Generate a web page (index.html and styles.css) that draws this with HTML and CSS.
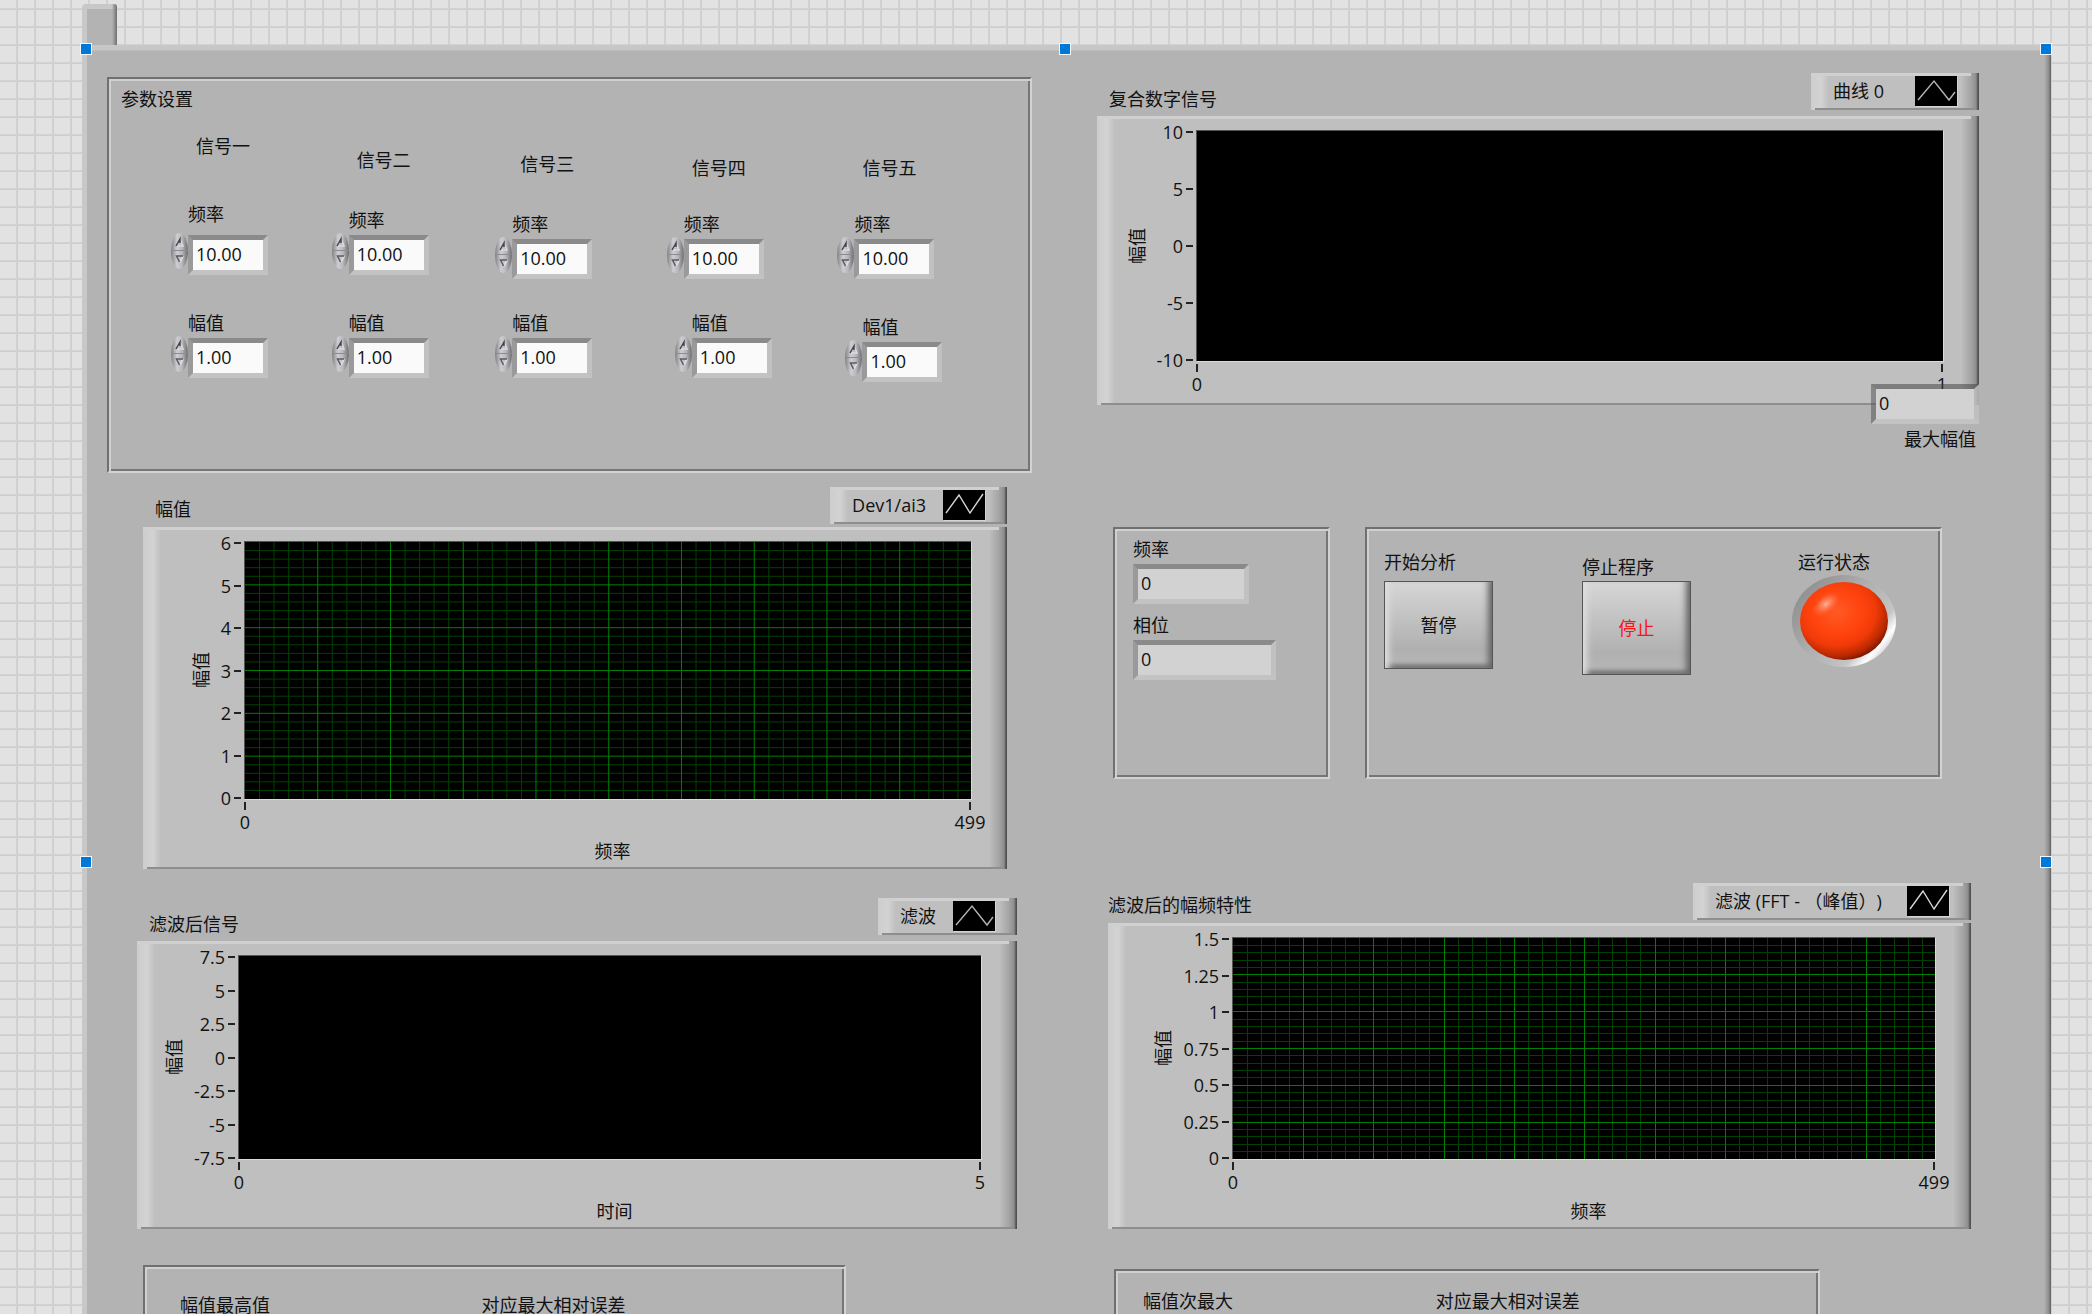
FILE: index.html
```html
<!DOCTYPE html>
<html lang="zh-CN">
<head>
<meta charset="utf-8">
<meta name="viewport" content="width=device-width, initial-scale=1">
<title>信号分析</title>
<link rel="stylesheet" href="styles.css">
</head>
<body>
<svg class="defs" aria-hidden="true">
  <symbol id="grid" viewBox="0 0 499 30" preserveAspectRatio="none">
    <path class="grid__minor" d="M10 0V30M20 0V30M30 0V30M40 0V30M60 0V30M70 0V30M80 0V30M90 0V30M110 0V30M120 0V30M130 0V30M140 0V30M160 0V30M170 0V30M180 0V30M190 0V30M210 0V30M220 0V30M230 0V30M240 0V30M260 0V30M270 0V30M280 0V30M290 0V30M310 0V30M320 0V30M330 0V30M340 0V30M360 0V30M370 0V30M380 0V30M390 0V30M410 0V30M420 0V30M430 0V30M440 0V30M460 0V30M470 0V30M480 0V30M490 0V30M0 1H499M0 2H499M0 3H499M0 4H499M0 6H499M0 7H499M0 8H499M0 9H499M0 11H499M0 12H499M0 13H499M0 14H499M0 16H499M0 17H499M0 18H499M0 19H499M0 21H499M0 22H499M0 23H499M0 24H499M0 26H499M0 27H499M0 28H499M0 29H499"/>
    <path class="grid__major" d="M50 0V30M100 0V30M150 0V30M200 0V30M250 0V30M300 0V30M350 0V30M400 0V30M450 0V30M0 5H499M0 10H499M0 15H499M0 20H499M0 25H499"/>
  </symbol>
  <symbol id="wave" viewBox="0 0 42 30"><path d="M3 24L19 5L34 24L40 16" fill="none" stroke="#b4b4b4" stroke-width="1.4"/></symbol>
  <symbol id="zigzag" viewBox="0 0 42 30"><path d="M3 23L16 5L27 23L40 4" fill="none" stroke="#d6d6d6" stroke-width="1.4"/></symbol>
  <symbol id="up" viewBox="0 0 17 17"><path d="M9 6L12 13H6" fill="none" stroke="#dcdce0" stroke-width="1.5"/><path d="M5 13L9 6V10" fill="none" stroke="#45454a" stroke-width="1.5"/></symbol>
  <symbol id="down" viewBox="0 0 17 17"><path d="M9 10L12 4" stroke="#dcdce0" stroke-width="2"/><path d="M12 4H5.500L8.500 10" fill="none" stroke="#5c5c60" stroke-width="1.500"/></symbol>
</svg>

<main class="workspace">
  <div class="tab"></div>
  <div class="panel">
    <span class="handle handle--tl"></span><span class="handle handle--tc"></span><span class="handle handle--tr"></span>
    <span class="handle handle--ml"></span><span class="handle handle--mr"></span>

    <div class="column column--left">
      <section class="group group--params">
        <h2 class="text group__title">参数设置</h2>
        <div class="signals">
          <div class="signal">
            <div class="signal__head">
              <h3 class="text signal__name">信号一</h3>
              <div class="control control--spaced"><label class="text" for="f1">频率</label>
                <div class="numeric"><span class="spin"><button aria-label="增加"><svg><use href="#up"/></svg></button><button aria-label="减少"><svg><use href="#down"/></svg></button></span><input class="field" id="f1" value="10.00"></div></div>
            </div>
            <div class="control"><label class="text" for="a1">幅值</label>
              <div class="numeric"><span class="spin"><button aria-label="增加"><svg><use href="#up"/></svg></button><button aria-label="减少"><svg><use href="#down"/></svg></button></span><input class="field" id="a1" value="1.00"></div></div>
          </div>
          <div class="signal signal--second">
            <div class="signal__head">
              <h3 class="text signal__name">信号二</h3>
              <div class="control"><label class="text" for="f2">频率</label>
                <div class="numeric"><span class="spin"><button aria-label="增加"><svg><use href="#up"/></svg></button><button aria-label="减少"><svg><use href="#down"/></svg></button></span><input class="field" id="f2" value="10.00"></div></div>
            </div>
            <div class="control"><label class="text" for="a2">幅值</label>
              <div class="numeric"><span class="spin"><button aria-label="增加"><svg><use href="#up"/></svg></button><button aria-label="减少"><svg><use href="#down"/></svg></button></span><input class="field" id="a2" value="1.00"></div></div>
          </div>
          <div class="signal signal--low">
            <div class="signal__head">
              <h3 class="text signal__name">信号三</h3>
              <div class="control"><label class="text" for="f3">频率</label>
                <div class="numeric"><span class="spin"><button aria-label="增加"><svg><use href="#up"/></svg></button><button aria-label="减少"><svg><use href="#down"/></svg></button></span><input class="field" id="f3" value="10.00"></div></div>
            </div>
            <div class="control"><label class="text" for="a3">幅值</label>
              <div class="numeric"><span class="spin"><button aria-label="增加"><svg><use href="#up"/></svg></button><button aria-label="减少"><svg><use href="#down"/></svg></button></span><input class="field" id="a3" value="1.00"></div></div>
          </div>
          <div class="signal signal--low signal--lower">
            <div class="signal__head">
              <h3 class="text signal__name">信号四</h3>
              <div class="control"><label class="text" for="f4">频率</label>
                <div class="numeric"><span class="spin"><button aria-label="增加"><svg><use href="#up"/></svg></button><button aria-label="减少"><svg><use href="#down"/></svg></button></span><input class="field" id="f4" value="10.00"></div></div>
            </div>
            <div class="control control--shifted"><label class="text" for="a4">幅值</label>
              <div class="numeric"><span class="spin"><button aria-label="增加"><svg><use href="#up"/></svg></button><button aria-label="减少"><svg><use href="#down"/></svg></button></span><input class="field" id="a4" value="1.00"></div></div>
          </div>
          <div class="signal signal--low signal--lower signal--tall">
            <div class="signal__head">
              <h3 class="text signal__name">信号五</h3>
              <div class="control"><label class="text" for="f5">频率</label>
                <div class="numeric"><span class="spin"><button aria-label="增加"><svg><use href="#up"/></svg></button><button aria-label="减少"><svg><use href="#down"/></svg></button></span><input class="field" id="f5" value="10.00"></div></div>
            </div>
            <div class="control control--shifted"><label class="text" for="a5">幅值</label>
              <div class="numeric"><span class="spin"><button aria-label="增加"><svg><use href="#up"/></svg></button><button aria-label="减少"><svg><use href="#down"/></svg></button></span><input class="field" id="a5" value="1.00"></div></div>
          </div>
        </div>
      </section>

      <section class="chart chart--amplitude">
        <header class="chart__head">
          <h2 class="text chart__title">幅值</h2>
          <div class="legend bevel"><span class="text">Dev1/ai3</span><svg class="legend__icon"><use href="#zigzag"/></svg></div>
        </header>
        <div class="chart__body bevel">
          <div class="yaxis"><span class="text yaxis__title">幅值</span>
            <ul class="yaxis__ticks"><li>6</li><li>5</li><li>4</li><li>3</li><li>2</li><li>1</li><li>0</li></ul></div>
          <svg class="plot"><use href="#grid"/></svg>
          <ul class="xaxis"><li>0</li><li>499</li></ul>
          <p class="text xaxis__title">频率</p>
        </div>
      </section>

      <section class="chart chart--filtered">
        <header class="chart__head">
          <h2 class="text chart__title">滤波后信号</h2>
          <div class="legend bevel"><span class="text">滤波</span><svg class="legend__icon"><use href="#wave"/></svg></div>
        </header>
        <div class="chart__body bevel">
          <div class="yaxis"><span class="text yaxis__title">幅值</span>
            <ul class="yaxis__ticks"><li>7.5</li><li>5</li><li>2.5</li><li>0</li><li>-2.5</li><li>-5</li><li>-7.5</li></ul></div>
          <svg class="plot"></svg>
          <ul class="xaxis"><li>0</li><li>5</li></ul>
          <p class="text xaxis__title">时间</p>
        </div>
      </section>

      <section class="group group--result group--highest">
        <span class="text">幅值最高值</span><span class="text">对应最大相对误差</span>
      </section>
    </div>

    <div class="column column--right">
      <section class="chart chart--composite">
        <header class="chart__head">
          <h2 class="text chart__title">复合数字信号</h2>
          <div class="legend bevel"><span class="text">曲线 0</span><svg class="legend__icon"><use href="#wave"/></svg></div>
        </header>
        <div class="chart__body bevel">
          <div class="yaxis"><span class="text yaxis__title">幅值</span>
            <ul class="yaxis__ticks"><li>10</li><li>5</li><li>0</li><li>-5</li><li>-10</li></ul></div>
          <svg class="plot"></svg>
          <ul class="xaxis"><li>0</li><li>1</li></ul>
        </div>
        <div class="peak">
          <input class="field field--readout" id="peak" value="0" readonly>
          <label class="text" for="peak">最大幅值</label>
        </div>
      </section>

      <div class="status">
        <section class="group readouts">
          <label class="text" for="freq">频率</label>
          <input class="field field--readout field--freq" id="freq" value="0" readonly>
          <label class="text" for="phase">相位</label>
          <input class="field field--readout field--phase" id="phase" value="0" readonly>
        </section>
        <section class="group actions">
          <div class="action"><span class="text">开始分析</span><button class="push">暂停</button></div>
          <div class="action action--stop"><span class="text">停止程序</span><button class="push push--stop">停止</button></div>
          <div class="action action--led"><span class="text">运行状态</span>
            <svg class="led" viewBox="0 0 107 94" role="img" aria-label="运行状态">
              <defs>
                <linearGradient id="ring" x1="0.1" y1="0.2" x2="0.9" y2="0.8"><stop offset="0" stop-color="#929292"/><stop offset=".45" stop-color="#b0b0b0"/><stop offset=".8" stop-color="#c4c4c4"/><stop offset=".93" stop-color="#fff"/><stop offset="1" stop-color="#ddd"/></linearGradient>
                <radialGradient id="lamp" cx=".42" cy=".38" r=".65"><stop offset="0" stop-color="#ff5a24"/><stop offset=".45" stop-color="#ff430e"/><stop offset=".68" stop-color="#f03a08"/><stop offset=".88" stop-color="#b82800"/><stop offset="1" stop-color="#701400"/></radialGradient>
                <radialGradient id="shine"><stop offset="0" stop-color="#ffb49c"/><stop offset=".4" stop-color="#ff8a66" stop-opacity=".7"/><stop offset="1" stop-color="#ff5a24" stop-opacity="0"/></radialGradient>
              </defs>
              <ellipse cx="53" cy="47" rx="52" ry="46" fill="url(#ring)"/>
              <ellipse cx="53" cy="47" rx="44" ry="39" fill="url(#lamp)"/>
              <ellipse cx="35" cy="30" rx="17" ry="10" transform="rotate(-38 35 30)" fill="url(#shine)"/>
            </svg></div>
        </section>
      </div>

      <section class="chart chart--spectrum">
        <header class="chart__head">
          <h2 class="text chart__title">滤波后的幅频特性</h2>
          <div class="legend bevel"><span class="text">滤波 (FFT - （峰值）)</span><svg class="legend__icon"><use href="#zigzag"/></svg></div>
        </header>
        <div class="chart__body bevel">
          <div class="yaxis"><span class="text yaxis__title">幅值</span>
            <ul class="yaxis__ticks"><li>1.5</li><li>1.25</li><li>1</li><li>0.75</li><li>0.5</li><li>0.25</li><li>0</li></ul></div>
          <svg class="plot"><use href="#grid"/></svg>
          <ul class="xaxis"><li>0</li><li>499</li></ul>
          <p class="text xaxis__title">频率</p>
        </div>
      </section>

      <section class="group group--result group--second">
        <span class="text">幅值次最大</span><span class="text">对应最大相对误差</span>
      </section>
    </div>
  </div>
</main>
</body>
</html>
```
FILE: styles.css
```css
* { box-sizing: border-box; }

body {
  margin: 0;
  color: #111;
  font: 18px/20px "Open Sans", "Noto Sans CJK SC", sans-serif;
  text-spacing-trim: space-all;
  background-color: #e2e2e2;
  background-image:
    linear-gradient(90deg, #d3d3d3 0 1px, #cecece 1px 2px, transparent 2px),
    linear-gradient(#d3d3d3 0 1px, #cecece 1px 2px, transparent 2px);
  background-size: 18px 18px;
  background-position: 16px 8px;
}

ul { margin: 0; padding: 0; list-style: none; }
input, button { font: inherit; color: inherit; border-radius: 0; }

.defs { position: absolute; width: 0; height: 0; }
.text { margin: 0; font-size: 18px; font-weight: 400; line-height: 20px; white-space: nowrap; }

.grid__minor, .grid__major { fill: none; stroke-width: 1px; vector-effect: non-scaling-stroke; shape-rendering: crispEdges; }
.grid__minor { stroke: #004000; }
.grid__major { stroke: #008000; }

/* Front panel */
.workspace { display: flex; flex-direction: column; height: 100vh; overflow: hidden; padding: 4px 41px 0 82px; }

.tab {
  position: relative;
  flex: none;
  width: 35px;
  height: 46px;
  margin-bottom: -5px;
  border-radius: 4px 3px 0 0;
  background:
    linear-gradient(90deg, transparent 30px, #9a9a9a 32px, #6e6e6e 35px),
    linear-gradient(#c8c8c8 5px, transparent 5px),
    linear-gradient(90deg, #c8c8c8 5px, #b3b3b3 5px);
}

.panel {
  position: relative;
  flex: 1 0 auto;
  display: grid;
  grid-template-columns: 925fr 882fr;
  column-gap: 65px;
  padding: 5px 72px 0 25px;
  background:
    linear-gradient(270deg, #6a6a6a 0 1px, #8c8c8c 2px, #b3b3b3 7px, transparent 7px),
    linear-gradient(90deg, #c8c8c8 5px, transparent 5px),
    linear-gradient(#c7c7c7 5px, #b3b3b3 6px);
}

.handle { position: absolute; width: 12px; height: 12px; border: 1px solid #f4f8fc; background: #0078d7; }
.handle--tl { top: -2px; left: -2px; }
.handle--tc { top: -2px; left: calc(50% - 8px); }
.handle--tr { top: -2px; right: -1px; }
.handle--ml { top: 811px; left: -2px; }
.handle--mr { top: 811px; right: -1px; }

.column { display: flex; flex-direction: column; min-width: 0; }
.column--left { padding-top: 27px; }
.column--right { padding-top: 23px; }

/* Etched frames */
.group {
  border: 2px solid;
  border-color: #707070 #d2d2d2 #d2d2d2 #707070;
  box-shadow: inset 2px 2px #d0d0d0, inset -2px -2px #767676;
}

.group--params { min-height: 396px; padding: 10px 0 0 12px; }
.group__title { margin-bottom: 27px; }

.signals { display: grid; grid-template-columns: 161fr 164fr 172fr 171fr 193fr; padding-left: 50px; }
.signal { display: grid; grid-template-rows: 139px 103px; align-items: end; }
.signal--low { grid-template-rows: 143px 99px; }
.signal--tall { grid-template-rows: 143px 103px; }
.signal__head { display: flex; flex-direction: column; justify-content: space-between; height: 100%; }
.signal--second .signal__head { padding-top: 14px; }
.signal--low .signal__head { padding-top: 18px; }
.signal--lower .signal__head { padding-top: 22px; }
.signal__name { padding-left: 25px; }

.control { display: flex; flex-direction: column; gap: 5px; }
.control--spaced { gap: 11px; }
.control--shifted { margin-left: 8px; }
.control > label { padding-left: 17px; }

.numeric { display: flex; align-items: flex-start; height: 40px; }
.spin { display: flex; flex-direction: column; width: 17px; height: 36px; margin-top: -2px; border-radius: 50%; overflow: hidden; background: linear-gradient(90deg, #808084, #cfcfd3 35%, #b8b8bc 65%, #6c6c70); }
.spin button { height: 18px; padding: 0; border: 0; background: none; }
.spin button:first-child { border-bottom: 1px solid #8c8c90; }
.spin svg { display: block; width: 17px; height: 17px; }

.field {
  width: 80px;
  height: 40px;
  padding: 0 3px 2px;
  border: 5px solid;
  border-color: #8a8a8a #c1c1c1 #c3c3c3 #9a9a9a;
  background: #fafafa;
  outline: 0;
}
.field--readout { background: #d2d2d2; }

/* Charts */
.bevel {
  background:
    linear-gradient(270deg, #505050 0 1px, #747474 2px, transparent 3px),
    linear-gradient(#d0d0d0 3px, transparent 3px) 0 0 / calc(100% - 8px) 100% no-repeat,
    linear-gradient(0deg, #8e8e8e 2px, transparent 2px) 4px 0 / 100% 100% no-repeat,
    linear-gradient(270deg, #808080, #a4a4a4 8px, #bfbfbf 18px, transparent 18px),
    linear-gradient(90deg, #cdcdcd, #d3d3d3 10px, #bfbfbf 18px);
}

.chart { position: relative; --gutter: 101px; }
.chart__head { display: flex; justify-content: space-between; align-items: flex-end; padding-bottom: 3px; }
.chart__title { padding: 0 0 5px 12px; }

.legend { display: flex; align-items: center; justify-content: space-between; gap: 17px; height: 37px; padding: 0 22px 2px 22px; }
.legend__icon { flex: none; width: 42px; height: 30px; background: #000; box-shadow: 1px 1px #d4d4d4; }

.chart__body { display: grid; grid-template-columns: var(--gutter) 1fr; padding: 14px 36px 8px 0; }
.plot { width: 100%; height: var(--plot); background: #000; border-top: 1px solid #555; border-left: 1px solid #555; box-shadow: 1px 1px #dadada; }

.yaxis { display: flex; justify-content: flex-end; align-items: center; gap: 10px; padding-right: 3px; }
.yaxis__title { writing-mode: vertical-rl; text-orientation: sideways; transform: rotate(180deg); }
.yaxis__ticks { display: flex; flex-direction: column; justify-content: space-between; align-self: stretch; padding-top: 1px; }
.yaxis__ticks li { display: flex; justify-content: flex-end; align-items: center; gap: 3px; height: 2px; }
.yaxis__ticks li::after { content: ""; width: 7px; height: 2px; background: #222; }

.xaxis { grid-column: 2; display: flex; justify-content: space-between; height: 34px; padding-top: 3px; }
.xaxis li { display: flex; flex-direction: column; align-items: center; gap: 2px; width: 2px; }
.xaxis li::before { content: ""; flex: none; width: 2px; height: 8px; background: #222; }
.xaxis__title { grid-column: 2; padding: 8px 0 0 10px; text-align: center; }

.chart--amplitude { --plot: 258px; margin: 14px 25px 0 36px; }
.chart--filtered { --plot: 204px; margin: 29px 15px 0 30px; }
.chart--filtered .chart__head, .chart--composite .chart__head { padding-bottom: 6px; }
.chart--filtered .chart__title, .chart--composite .chart__title { padding-bottom: 1px; }
.chart--composite { --plot: 231px; --gutter: 99px; }
.chart--composite .chart__body { padding-bottom: 10px; }
.chart--composite .legend { min-width: 168px; }
.chart--spectrum { --plot: 222px; --gutter: 124px; margin: 104px 8px 0 11px; }
.chart--spectrum .chart__title { padding-left: 0; }
.chart--spectrum .legend { min-width: 278px; }

/* Peak readout lies over the composite chart's corner */
.peak { position: absolute; top: 311px; right: 0; display: flex; flex-direction: column; align-items: flex-end; gap: 5px; }
.peak .field {
  width: 108px;
  border-color: rgba(60, 60, 60, .5) rgba(195, 195, 195, .8) #c3c3c3 rgba(80, 80, 80, .5);
  background-clip: padding-box;
}
.peak label { padding-right: 3px; }

/* Readouts and controls */
.status { display: grid; grid-template-columns: 217fr 577fr; column-gap: 35px; min-height: 252px; margin: 122px 37px 0 16px; }

.readouts { display: flex; flex-direction: column; align-items: flex-start; gap: 5px; padding: 10px 0 0 18px; }
.readouts .field--freq { width: 116px; margin-bottom: 6px; }
.readouts .field--phase { width: 143px; }

.actions { display: grid; grid-template-columns: 198fr 209fr 149fr; align-items: start; padding: 23px 0 0 17px; }
.action { display: flex; flex-direction: column; align-items: flex-start; gap: 9px; }
.action--stop { padding-top: 5px; gap: 4px; }
.action--led { gap: 2px; }
.action--led .text { padding-left: 7px; }
.led { width: 107px; height: 94px; }

.push {
  width: 109px;
  height: 88px;
  padding: 0;
  border: 1px solid #555;
  background: linear-gradient(#d6d6d6, #cacaca 25%, #b0b0b0 78%, #b8b8b8);
  box-shadow: inset 8px 0 6px -4px #dedede, inset -8px 0 6px -4px #666, inset 0 -6px 5px -3px #666, inset 0 3px 3px #d8d8d8;
}
.push--stop { height: 94px; color: #fa1414; }

/* Result frames */
.group--result { display: grid; grid-template-columns: 302fr 363fr; align-content: start; min-height: 160px; }
.group--highest { width: 76%; margin: 36px 0 0 36px; padding: 28px 0 0 35px; }
.group--second { width: 80%; margin: 40px 0 0 17px; padding: 20px 0 0 27px; grid-template-columns: 292fr 381fr; }
```
